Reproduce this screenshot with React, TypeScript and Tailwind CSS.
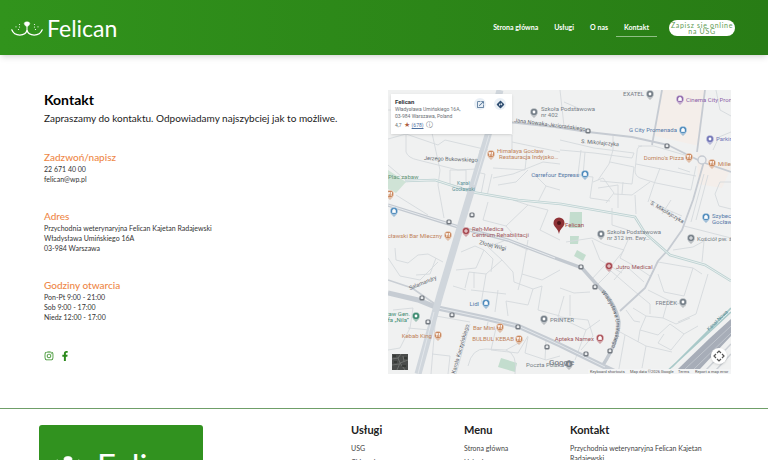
import type { ReactNode } from "react";
import { FaFacebookF, FaInstagram } from "react-icons/fa";
import { MdDirections, MdOpenInNew } from "react-icons/md";

type Poi = {
  x: number;
  y: number;
  color: string;
  glyph: "food" | "shop" | "dot" | "cross";
  lines?: { text: string; x: number; y: number; end?: boolean }[];
};

const ORANGE = "#c9875c";
const GREY = "#77818a";
const BLUE = "#4484b8";
const RED = "#a84a52";

const navItems = [
  { label: "Strona główna", active: false },
  { label: "Usługi", active: false },
  { label: "O nas", active: false },
  { label: "Kontakt", active: true },
];

const minorStreets = [
  "M18 43V62Q20 68 30 70L70 80L88 79",
  "M0 49L18 44L50 55L57 50L100 60",
  "M44 43L52 80L50 95L56 128",
  "M62 80H78V93L72 97L62 94Z",
  "M0 20H8M0 75L20 92M8 105L40 125",
  "M124 45V61M124 52L172 62M139 61L137 80L105 78",
  "M92 60L88 82L97 84L93 104M104 84L99 106",
  "M105 88L125 84L155 72L172 74M110 95L128 92L140 80",
  "M100 112L95 130L118 136L140 115L125 110M118 136L130 150M140 115L160 120L152 140L172 150",
  "M150 112L158 96L146 84M158 96L172 100",
  "M172 0L176 36M176 12L190 18M172 50L206 58L246 63L244 68L206 63L172 60",
  "M193 60L190 84M197 62L195 86M190 84L198 86",
  "M225 46V60L221 74L210 90M222 72L246 77L244 94L212 91",
  "M254 56Q249 56 249 62L247 80Q247 86 252 88L268 93L303 100L308 76",
  "M250 56L266 56L300 66M248 74L308 86M272 78L266 94L260 112",
  "M173 84L205 87L202 108L222 111M205 92L215 88L226 103L218 113M210 98L230 95V118",
  "M226 104L244 105L262 92M247 105L248 124M235 92L234 104M224 118V135L240 140",
  "M262 110L280 120L294 126M283 110L274 124M290 78L302 82",
  "M320 85L308 130M316 84L303 132M343 92L332 92L327 104L331 116L343 119",
  "M325 60L331 47L343 42M328 0L332 20L343 26M296 136L343 148",
  "M7 158L8 170L20 173L30 165L40 164L55 172",
  "M0 168L12 186L32 190L50 172M28 185L42 184L48 168",
  "M73 162L87 156L96 160L88 178L68 180M96 160L105 169L103 182",
  "M77 198L81 182L98 184L93 214M98 184L114 170L100 157L118 150L140 160",
  "M110 200L107 222M83 200L118 204M65 196L78 200M86 182V198",
  "M114 170L125 182L126 192L145 199L154 196L150 220L172 226M145 199L140 215L118 211",
  "M140 150L134 184L154 190L172 180M134 184L130 200M118 211L120 226",
  "M5 220L25 218L22 238L12 258L0 260M20 238L42 240",
  "M48 223L43 284M48 226L82 232M44 264L62 266L60 284",
  "M82 234L68 284M108 238L103 260L130 263L140 246M100 232L98 240",
  "M80 276Q84 258 98 259L118 260Q130 264 127 284M118 260L136 250",
  "M140 247L137 263L158 270L172 266M158 250L157 270",
  "M172 198L186 203L202 202M176 206L170 227L198 240L212 230",
  "M172 227L200 230L205 246L193 260M182 205V226M198 240L187 270",
  "M178 152L204 148L216 154L236 160L224 175M204 150L212 170L234 183",
  "M216 175L245 200L262 214L262 224M226 190L238 176L256 192",
  "M240 150L232 168L250 178L262 186M203 190L216 176M209 195L223 181",
  "M270 172L305 178L296 206L276 202L270 184M305 178L314 184",
  "M285 160L305 157L316 151L314 172M320 184L308 224L290 232",
  "M260 200L280 210L275 228L258 226L245 218M280 210L298 216",
  "M275 228L288 234L302 228M258 226L252 240L270 245L282 234",
  "M232 242L258 256L284 262M238 220L246 231L252 232M252 240L250 252",
  "M282 234L296 244L283 260L270 253L276 244M296 244L310 236",
  "M237 245L230 284M258 256L254 278",
];

const majorStreets = [
  "M120 32L167 37L200 42L244 47L280 55L314 72L343 82",
  "M274 0L264 55",
  "M317 0L309 62",
  "M317 68L305 110L294 140L280 160L270 171L257 198L232 221",
];

const canalPath = "M17 91L47 90L84 102L130 110L173 114L247 127L257 143L282 165L317 175L343 191";

const stops = [
  [200, 41], [279, 56], [61, 132], [84, 125], [34, 208], [40, 232], [64, 225],
  [130, 237], [159, 257], [193, 177], [207, 197], [222, 261], [198, 264],
];

const pois: Poi[] = [
  { x: 146, y: 22, color: GREY, glyph: "dot", lines: [{ text: "Szkoła Podstawowa", x: 153, y: 21 }, { text: "nr 402", x: 153, y: 27 }] },
  { x: 262, y: 4, color: GREY, glyph: "dot", lines: [{ text: "EXATEL", x: 256, y: 6, end: true }] },
  { x: 292, y: 9, color: "#8c62a8", glyph: "shop", lines: [{ text: "Cinema City Prom", x: 298, y: 12 }] },
  { x: 295, y: 40, color: BLUE, glyph: "shop", lines: [{ text: "G City Promenada", x: 289, y: 42, end: true }] },
  { x: 322, y: 49, color: "#7478b8", glyph: "dot", lines: [{ text: "Parkin", x: 328, y: 51 }] },
  { x: 103, y: 64, color: ORANGE, glyph: "food", lines: [{ text: "Himalaya Gocław", x: 109, y: 63 }, { text: "Restauracja Indyjsko…", x: 111, y: 69 }] },
  { x: 301, y: 67, color: ORANGE, glyph: "food", lines: [{ text: "Domino's Pizza", x: 296, y: 70, end: true }] },
  { x: 324, y: 73, color: ORANGE, glyph: "food", lines: [{ text: "Millen", x: 330, y: 76 }] },
  { x: 197, y: 84, color: BLUE, glyph: "shop", lines: [{ text: "Carrefour Express", x: 191, y: 87, end: true }] },
  { x: 2, y: 104, color: ORANGE, glyph: "food" },
  { x: 6, y: 121, color: BLUE, glyph: "shop" },
  { x: 318, y: 127, color: BLUE, glyph: "shop", lines: [{ text: "Szybec", x: 324, y: 128 }, { text: "Gocław", x: 324, y: 134 }] },
  { x: 60, y: 145, color: ORANGE, glyph: "food", lines: [{ text: "Wrocławski Bar Mleczny", x: 54, y: 148, end: true }] },
  { x: 78, y: 141, color: RED, glyph: "cross", lines: [{ text: "Reh-Medica", x: 84, y: 141 }, { text: "Centrum Rehabilitacji", x: 84, y: 147 }] },
  { x: 213, y: 144, color: GREY, glyph: "dot", lines: [{ text: "Szkoła Podstawowa", x: 219, y: 144 }, { text: "nr 312 im. Ewy…", x: 219, y: 150 }] },
  { x: 303, y: 148, color: GREY, glyph: "cross", lines: [{ text: "Kościół pw. ś", x: 309, y: 151 }] },
  { x: 221, y: 176, color: RED, glyph: "cross", lines: [{ text: "Jutro Medical", x: 228, y: 179 }] },
  { x: 98, y: 213, color: BLUE, glyph: "shop", lines: [{ text: "Lidl", x: 91, y: 216, end: true }] },
  { x: 295, y: 212, color: GREY, glyph: "dot", lines: [{ text: "FREDEK", x: 289, y: 215, end: true }] },
  { x: 28, y: 226, color: "#3f8c72", glyph: "dot", lines: [{ text: "Staw Gen.", x: 22, y: 226, end: true }, { text: "Tarfa „Nila”", x: 21, y: 232, end: true }] },
  { x: 156, y: 229, color: GREY, glyph: "dot", lines: [{ text: "PRINTER", x: 162, y: 232 }] },
  { x: 112, y: 237, color: ORANGE, glyph: "food", lines: [{ text: "Bar Mini", x: 107, y: 240, end: true }] },
  { x: 50, y: 245, color: ORANGE, glyph: "food", lines: [{ text: "Kebab King", x: 44, y: 248, end: true }] },
  { x: 131, y: 249, color: ORANGE, glyph: "food", lines: [{ text: "BULBUL KEBAB", x: 126, y: 251, end: true }] },
  { x: 212, y: 248, color: RED, glyph: "shop", lines: [{ text: "Apteka Namex", x: 206, y: 251, end: true }] },
  { x: 181, y: 274, color: GREY, glyph: "dot", lines: [{ text: "Poczta Polska", x: 176, y: 277, end: true }] },
];

const textColors: Record<string, string> = {
  [ORANGE]: "#bf8259",
  [GREY]: "#757d86",
  [BLUE]: "#5478a8",
  [RED]: "#a15a62",
};

function CatFace({ className }: { className?: string }) {
  return (
    <svg viewBox="0 0 32 16" className={className} fill="none" stroke="white" aria-hidden="true">
      <path d="M.8 9.800C3.500 17 14.500 16.500 16 10.200C17.500 16.500 28.500 17 31.200 9.800" strokeWidth="1.3" strokeLinecap="round" />
      <path d="M13.200 3.600Q13.200 1.800 16 1.800T18.800 3.600Q18.600 5.800 16 6.500Q13.400 5.800 13.200 3.600Z" fill="white" strokeWidth=".5" />
      <path d="M16 6V10.500" strokeWidth="1.100" />
      <g fill="white" stroke="none">
        <circle cx="8.500" cy="4.500" r=".6" />
        <circle cx="5" cy="6.800" r=".6" />
        <circle cx="8.500" cy="7" r=".6" />
        <circle cx="7.500" cy="9.500" r=".6" />
        <circle cx="23.500" cy="4.500" r=".6" />
        <circle cx="27" cy="6.800" r=".6" />
        <circle cx="23.500" cy="7" r=".6" />
        <circle cx="24.500" cy="9.500" r=".6" />
      </g>
    </svg>
  );
}

function PoiMarker({ poi }: { poi: Poi }) {
  return (
    <g>
      <path d={`M${poi.x - 3} ${poi.y + 3}L${poi.x} ${poi.y + 6}L${poi.x + 3} ${poi.y + 3}Z`} fill={poi.color} opacity=".5" />
      <circle cx={poi.x} cy={poi.y} r="3.8" fill={poi.color} stroke="#fafafa" strokeWidth=".5" />
      <g transform={`translate(${poi.x} ${poi.y})`} fill="none" stroke="white" strokeWidth=".8">
        {poi.glyph === "food" && <path d="M-1.2 -2V2M-2 -2V-.3H-.4V-2M1.2 2V-2Q2 -1 1.2 .2" />}
        {poi.glyph === "shop" && <path d="M-1.6 -.8H1.6V1.7H-1.6ZM-.8 -.8V-1.8H.8V-.8" fill="white" strokeWidth=".5" />}
        {poi.glyph === "dot" && <circle r="1.4" fill="white" stroke="none" />}
        {poi.glyph === "cross" && <path d="M0 -2V2M-2 0H2" />}
      </g>
      {poi.lines?.map((line) => (
        <text
          key={line.text}
          x={line.x}
          y={line.y}
          textAnchor={line.end ? "end" : "start"}
          fill={textColors[poi.color] ?? poi.color}
        >
          {line.text}
        </text>
      ))}
    </g>
  );
}

function CityMap() {
  return (
    <svg viewBox="0 0 343 284" className="block w-full bg-[#f0f1f1] font-[Roboto,sans-serif] text-[6px]" role="img" aria-label="Mapa">
      {/* areas */}
      <path d="M274 0H317L311 56L267 46Z" fill="#f4eeea" />
      <path d="M309 62L317 68L343 78L334 98L310 94Z" fill="#f4eeea" />
      <path d="M0 80L18 92L8 103L0 99Z" fill="#cfe3d6" />
      <g fill="#c3ddce">
        <path d="M182 122H194V138H181Z" />
        <path d="M182 146H191L190 154H182Z" />
        <path d="M189 160L198 165L195 171L186 166Z" />
        <path d="M113 268L129 273L127 282L110 277Z" />
      </g>

      {/* streets */}
      <g fill="none" stroke="#d5d9dc" strokeWidth=".9" strokeLinejoin="round">
        {minorStreets.map((d) => (
          <path key={d} d={d} />
        ))}
      </g>
      <g fill="none" stroke="#c6cbd2" strokeWidth="1.8" strokeLinejoin="round">
        {majorStreets.map((d) => (
          <path key={d} d={d} />
        ))}
      </g>
      <path d={canalPath} fill="none" stroke="#bdd2d2" strokeWidth="2.6" />
      <path d={canalPath} fill="none" stroke="#e9efef" strokeWidth="1" />
      <circle cx="314" cy="70" r="4" fill="#f0f1f2" stroke="#c6cbd2" strokeWidth="1.4" />

      <path d="M0 115L74 138L120 150L167 168L194 178L210 196Q228 213 231 232Q231 250 215 275" fill="none" stroke="#c3c9d0" strokeWidth="3.4" />
      <path d="M0 115L74 138L120 150L167 168" fill="none" stroke="#e8ebee" strokeWidth="1" />
      <path d="M0 190L24 198L50 216" fill="none" stroke="#c9ced4" strokeWidth="1.6" />
      <path d="M0 203L30 210L50 218L97 228L130 236L172 255L217 277L232 284" fill="none" stroke="#c6ccd3" strokeWidth="5" />
      <path d="M50 218L97 228L130 236L172 255L217 277" fill="none" stroke="#e4e8ec" strokeWidth="1" />
      <path d="M112 0L100 45L85 95L72 138L52 205L30 284" fill="none" stroke="#d0d6dc" strokeWidth="7" />
      <path d="M101 45L86 95M46 222L30 284" fill="none" stroke="#e2e6ea" strokeWidth="1" />

      {/* expressway */}
      <path d="M284 277L343 218M276 284L343 222" fill="none" stroke="#a9c9c9" strokeWidth="1.6" />
      <path d="M290 279L322 248L343 229V246L312 279Z" fill="#a7adb8" />
      <path d="M297 279L343 236M306 279L343 243" stroke="#c7cbd2" strokeWidth=".8" />
      <path d="M318 280L343 254M328 280L343 264" stroke="#cdd1d6" strokeWidth="1.5" />

      {/* street names */}
      <g fill="#5d646b" fontSize="5.5">
        <text x="126" y="32" transform="rotate(7 126 32)">Jana Nowaka-Jeziorańskiego</text>
        <text x="36" y="70" transform="rotate(2 36 70)">Jerzego Bukowskiego</text>
        <text x="193" y="53" transform="rotate(5 193 53)">S. Mikołajczyka</text>
        <text x="262" y="114" transform="rotate(31 262 114)">S. Mikołajczyka</text>
        <text x="91" y="154" transform="rotate(14 91 154)">Złotej Wilgi</text>
        <text x="22" y="200" transform="rotate(-22 22 200)">Salamandry</text>
        <text x="67" y="284" transform="rotate(-74 67 284)">Karola Kaczyńskiego</text>
      </g>
      <path id="uminskiego" d="M213 202Q226 217 228 234Q228 245 222 262" fill="none" />
      <text fill="#5d646b" fontSize="5.5">
        <textPath href="#uminskiego">Władysława Umińskiego</textPath>
      </text>
      <text x="321" y="241" fill="#568b91" fontSize="5" transform="rotate(-44 321 241)">Kanał Nowa</text>
      <g fill="#609499" fontSize="5">
        <text x="69" y="95">Kanał</text>
        <text x="64" y="101">Gocławski</text>
        <text x="0" y="89" fill="#5f9475" fontSize="6">Plac zabaw</text>
      </g>

      {stops.map(([x, y]) => (
        <g key={`${x}-${y}`}>
          <rect x={x - 2.6} y={y - 2.6} width="5.2" height="5.2" rx="1.6" fill="#737980" />
          <rect x={x - 1.3} y={y - 1.5} width="2.6" height="2.4" rx=".5" fill="#e8eaec" />
        </g>
      ))}
      {pois.map((poi) => (
        <PoiMarker key={`${poi.x}-${poi.y}`} poi={poi} />
      ))}

      {/* clinic pin */}
      <path d="M171 144C170 138 165.500 137 165.500 133A5.500 5.500 0 0 1 176.500 133C176.500 137 172 138 171 144Z" fill="#8f3236" />
      <circle cx="171" cy="133" r="2" fill="#4d1518" />
      <text x="177" y="137" fill="#a04b50">Felican</text>

      <text x="161" y="275" fill="#7b828a" fontSize="8" fontWeight="500">Google</text>
      <path d="M200 279H343V284H200Z" fill="#f3f4f5" />
      <g fontSize="4" fill="#555">
        <text x="202" y="283">Keyboard shortcuts</text>
        <text x="242" y="283">Map data ©2026 Google</text>
        <text x="290" y="283">Terms</text>
        <text x="307" y="283">Report a map error</text>
      </g>
    </svg>
  );
}

function MapPanel() {
  return (
    <div className="relative overflow-hidden">
      <CityMap />
      <div className="absolute top-1 left-[3px] flex h-10 w-[121px] justify-between bg-white py-[3px] pr-[6px] pl-1 font-[Roboto,sans-serif] shadow-sm">
        <div className="text-[5px] leading-[7px] text-[#6b7075]">
          <h2 className="text-[6px] leading-[9px] font-bold text-[#303438]">Felican</h2>
          <p>Władysława Umińskiego 16A,</p>
          <p>03-984 Warszawa, Poland</p>
          <p className="mt-[2px] flex items-center gap-[2px]">
            4,7 <span className="text-[7px] text-[#b0603f]">★</span>
            <a href="#reviews" className="text-[#4d6f9f] underline">(678)</a>
            <span className="text-[7px]">ⓘ</span>
          </p>
        </div>
        <div className="flex gap-2 pt-px">
          <button aria-label="Otwórz w Mapach" className="flex size-3 items-center justify-center rounded-full bg-[#eaf0f6] text-[#44688f]">
            <MdOpenInNew size={9} />
          </button>
          <button aria-label="Trasa" className="flex size-3 items-center justify-center rounded-full bg-[#eaf0f6] text-[#2f4d70]">
            <MdDirections size={9} />
          </button>
        </div>
      </div>
      <button aria-label="Widok satelitarny" className="absolute bottom-1 left-1 size-4 bg-[#4a4c4b]">
        <svg viewBox="0 0 16 16" stroke="#777a77" fill="none" strokeWidth=".8">
          <path d="M0 5L6 4L9 0M6 4L8 9L16 6M8 9L5 16M0 11L7 10M8 9L13 16M11 2L12 7" />
          <path d="M1 2H4M2 8H5M10 12H14M12 4H15" stroke="#303331" strokeWidth="1.5" />
        </svg>
      </button>
      <button aria-label="Sterowanie mapą" className="absolute right-1 bottom-[10px] size-4 rounded-full bg-white shadow-sm">
        <svg viewBox="0 0 16 16" fill="none" stroke="#555" strokeWidth="1.200">
          <path d="M6 5L8 3L10 5M6 11L8 13L10 11M5 6L3 8L5 10M11 6L13 8L11 10" />
        </svg>
      </button>
    </div>
  );
}

function InfoBlock({ title, children }: { title: string; children: ReactNode }) {
  return (
    <section className="mb-[25px] text-[7px] leading-[10px] text-[#333]">
      <h2 className="text-[10px] leading-[14px] font-medium text-[#ee8747]">{title}</h2>
      {children}
    </section>
  );
}

export default function App() {
  return (
    <div className="h-screen overflow-hidden bg-white font-[Lato,sans-serif] text-[#222]">
      <header className="relative flex h-[55px] items-center justify-between bg-linear-to-r from-[#31931c] to-[#287c15] pr-[33px] pl-[11px] shadow-md">
        <a href="#home" className="flex items-center gap-1 text-white">
          <CatFace className="w-8" />
          <span className="text-[23px] leading-6">Felican</span>
        </a>
        <nav className="flex items-center text-[7px] leading-[18px] font-bold text-white">
          {navItems.map((item) => (
            <a
              key={item.label}
              href="#"
              className={item.active ? "border-b border-[#8fbf85] px-2" : "border-b border-transparent px-2"}
            >
              {item.label}
            </a>
          ))}
          <button className="ml-3 h-4 w-[66px] rounded-full bg-white text-[7px] leading-[6px] font-normal tracking-widest text-[#5f9c54]">
            Zapisz się online
            <br />
            na USG
          </button>
        </nav>
      </header>

      <main className="grid grid-cols-2 px-[37px] pt-[35px] pb-[34px]">
        <div className="pl-[7px]">
          <h1 className="text-[14px] leading-5 font-bold text-black">Kontakt</h1>
          <p className="mb-6 text-[10px] leading-4">
            Zapraszamy do kontaktu. Odpowiadamy najszybciej jak to możliwe.
          </p>
          <InfoBlock title="Zadzwoń/napisz">
            <a href="tel:226714000" className="block">22 671 40 00</a>
            <a href="mailto:felican@wp.pl" className="block">felican@wp.pl</a>
          </InfoBlock>
          <InfoBlock title="Adres">
            <p>Przychodnia weterynaryjna Felican Kajetan Radajewski</p>
            <p>Władysława Umińskiego 16A</p>
            <p>03-984 Warszawa</p>
          </InfoBlock>
          <InfoBlock title="Godziny otwarcia">
            <p>Pon-Pt 9:00 - 21:00</p>
            <p>Sob 9:00 - 17:00</p>
            <p>Niedz 12:00 - 17:00</p>
          </InfoBlock>
          <div className="flex gap-[6px] pt-1 text-[#2c8a1c]">
            <a href="#instagram" aria-label="Instagram"><FaInstagram size={10} /></a>
            <a href="#facebook" aria-label="Facebook"><FaFacebookF size={10} /></a>
          </div>
        </div>
        <div className="pl-1">
          <MapPanel />
        </div>
      </main>

      <footer className="grid grid-cols-[312px_113px_106px_1fr] border-t border-[#6f9f68] pt-4 pr-10 pl-[39px] text-[7px] leading-[10px] text-[#444]">
        <div>
          <a href="#home" className="flex h-20 w-[164px] items-center gap-[6px] rounded-[3px] bg-[#31921f] pl-[6px] text-white">
            <CatFace className="w-[46px]" />
            <span className="text-[33px] leading-8">Felican</span>
          </a>
        </div>
        <div>
          <h2 className="mb-2 text-[11px] leading-[10px] font-bold text-[#222]">Usługi</h2>
          <ul className="space-y-1">
            <li><a href="#usg">USG</a></li>
            <li><a href="#chirurgia">Chirurgia</a></li>
          </ul>
        </div>
        <div>
          <h2 className="mb-2 text-[11px] leading-[10px] font-bold text-[#222]">Menu</h2>
          <ul className="space-y-1">
            <li><a href="#home">Strona główna</a></li>
            <li><a href="#uslugi">Usługi</a></li>
          </ul>
        </div>
        <div>
          <h2 className="mb-2 text-[11px] leading-[10px] font-bold text-[#222]">Kontakt</h2>
          <p>Przychodnia weterynaryjna Felican Kajetan Radajewski</p>
        </div>
      </footer>
    </div>
  );
}
